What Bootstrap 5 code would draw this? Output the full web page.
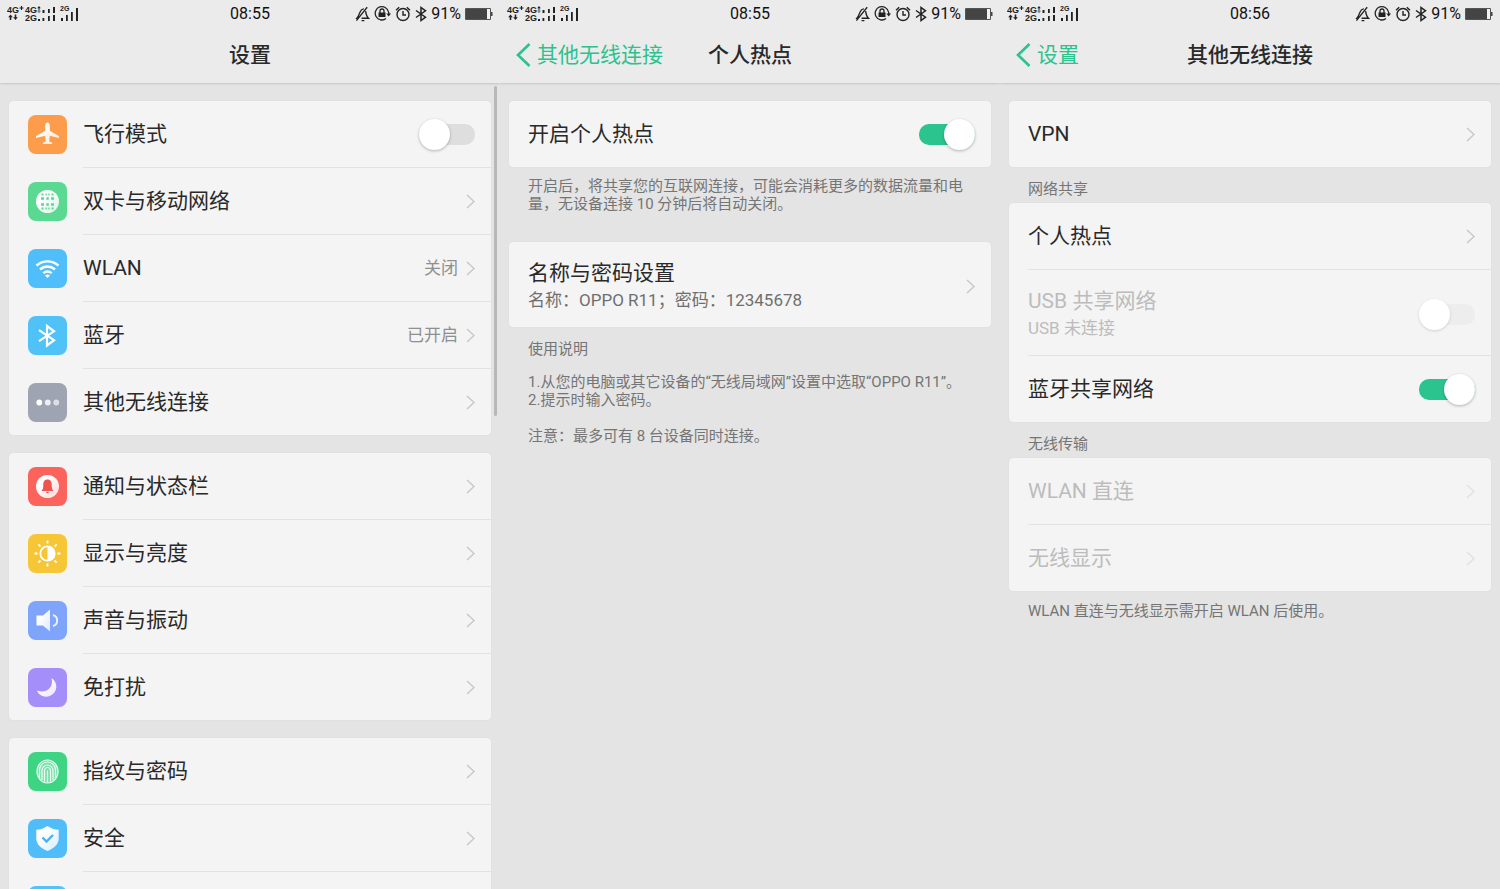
<!DOCTYPE html>
<html lang="zh-CN">
<head>
<meta charset="utf-8">
<meta name="viewport" content="width=device-width, initial-scale=1">
<title>设置</title>
<link href="https://cdn.jsdelivr.net/npm/bootstrap@5.3.0/dist/css/bootstrap.min.css" rel="stylesheet">
<style>
  body { background: #e4e4e4; color: #292929; font-family: Roboto, "Noto Sans CJK SC", sans-serif; font-size: 21px; line-height: 28px; }
  .screen { height: 100vh; overflow: hidden; }
  .topbar { background: #ebebeb; box-shadow: 0 1px 2px rgba(0,0,0,.14); }
  .equal-thirds { display: grid; grid-template-columns: 1fr auto 1fr; align-items: center; }
  .status { height: 26px; padding: 1px 7px 0; font-size: 16px; line-height: 25px; color: #111; }
  .signal { overflow: visible; fill: #222; }
  .titlebar { height: 57px; padding: 0 16px; }
  .titlebar h1 { font-size: 21px; line-height: 28px; font-weight: 500; }
  .back-link { color: #2bc28e; gap: 6px; }
  .panes { padding: 18px 9px 0; }
  .stack { gap: 18px; }
  .group-box { --bs-list-group-bg: #f4f4f4; --bs-list-group-color: #292929; border-radius: 4px; background: #f4f4f4; box-shadow: 0 0 1px rgba(0,0,0,.12); }
  .group-box .list-group-item { border: 0; padding: 0 0 0 19px; display: flex; align-items: center; gap: 16px; background: transparent; color: inherit; }
  .cell { min-height: 66px; padding-right: 16px; gap: 8px; }
  .cell-tall { min-height: 82px; padding-top: 3px; box-sizing: content-box; }
  .list-group-item:not(:last-child) > .cell { border-bottom: 1px solid #e2e2e2; box-sizing: content-box; }
  .app-icon { width: 39px; height: 39px; flex: none; }
  .state { font-size: 17px; color: #8f8f8f; }
  .detail { font-size: 17px; line-height: 26px; color: #6f6f6f; }
  .off .cell, .off .detail { color: #bcbcbc; }
  .off .chev { opacity: .4; }
  .chev { width: 9px; height: 15px; fill: none; stroke: #c8c8c8; stroke-width: 1.5px; flex: none; }
  .hint { margin: 0; padding: 0 19px; font-size: 15px; line-height: 18px; color: #757575; }
  .hint-intro { padding-top: 10px; padding-bottom: 29px; }
  .hint-title { padding-top: 13px; padding-bottom: 15px; }
  .hint-label { padding-top: 13px; padding-bottom: 5px; }
  .group-box + .hint-end { padding-top: 11px; }
  .group-box .toggle { appearance: none; position: relative; width: 56px; height: 31px; margin: 0; flex: none; border: 0; background: none; opacity: 1; }
  .toggle::before { content: ""; position: absolute; inset: 5px 0; border-radius: 10px; background: #dedede; }
  .toggle::after { content: ""; position: absolute; top: 0; left: 0; width: 31px; height: 31px; border-radius: 50%; background: #fff; box-shadow: 0 1px 3px rgba(0,0,0,.28); }
  .toggle:checked::before { background: #2bc48f; }
  .toggle:checked::after { left: auto; right: 0; }
  .toggle:disabled::before { background: #ededed; }
  .toggle:disabled::after { box-shadow: 0 1px 3px rgba(0,0,0,.14); }
  .scroll-thumb { position: absolute; right: 3px; top: 86px; width: 3px; height: 330px; border-radius: 2px; background: #b8b8b8; }
  svg text { font-family: "Liberation Sans", sans-serif; font-weight: 700; font-size: 9px; }
  svg text.tiny { font-size: 7px; }
</style>
</head>
<body>
<svg class="position-absolute" width="0" height="0" xmlns="http://www.w3.org/2000/svg">
  <defs>
    <linearGradient id="fade" x1="0" y1="0" x2="1" y2="1"><stop offset=".3" stop-color="#fff"/><stop offset="1" stop-color="#fff" stop-opacity=".75"/></linearGradient>
  </defs>
  <symbol id="bars" viewBox="0 0 74 20">
    <g fill="#222">
      <path d="M12.500 4h4M14.500 2v4" stroke="#222" stroke-width="1.200"/>
      <path d="M3.500 10.500l2.300 2.700H4.300V16H2.700v-2.800H1.200zM8.500 16l-2.300-2.700h1.500v-2.800h1.600v2.800h1.500z"/>
      <path d="M32 2l1.800 2.200h-3.600zM32 9l1.800-2.200h-3.600zM31.500 3h1v5h-1z"/>
      <path d="M35.500 6h2v3h-2zM41 5h1.800v4H41zM46 3h2v6h-2z"/>
      <path d="M31 15h2v2h-2zM35.500 14h1.800v3h-1.800zM41 12h1.800v5H41zM46 11h2v6h-2z"/>
      <path d="M54 14h2v3h-2zM59 11h1.800v6H59zM64 8h1.800v9H64zM69 4h2v13h-2z"/>
    </g>
  </symbol>
  <symbol id="quiet" viewBox="0 0 16 16"><g fill="none" stroke="#222" stroke-width="1.400"><path d="M9.500 2.500C4.500 2.800 5.600 8.500 2 12.500h1.500M11.300 5c.4 3 .9 5.500 3 7.500H7M13 .800L1.500 15M7 15h3"/></g></symbol>
  <symbol id="rotlock" viewBox="0 0 17 17"><path d="M14.500 7A6.700 6.700 0 1 0 12 13.600M14.700 7v2" fill="none" stroke="#222" stroke-width="1.300"/><path d="M12.300 8.500h4.700l-2.300 3z" fill="#222"/><path d="M4.500 7.500h7V12h-7z" fill="#222"/><path d="M6 8V6a2 2 0 0 1 4 0v2" fill="none" stroke="#222" stroke-width="1.300"/></symbol>
  <symbol id="alarm" viewBox="0 0 16 16"><g fill="none" stroke="#222" stroke-width="1.400"><circle cx="8" cy="8.500" r="6"/><path d="M8 5v4h3M1 4.200L4.200 1.200M15 4.200l-3.200-3"/></g></symbol>
  <symbol id="bt" viewBox="0 0 12 16"><path d="M1 4.500l9.500 6.700L6 14.500v-13l4.500 3.300L1 11.500" fill="none" stroke="#222" stroke-width="1.500"/></symbol>
  <symbol id="battery" viewBox="0 0 28 12"><path d="M.5.500h25v11H.5z" fill="#f2f2f2" stroke="#555"/><path d="M1 1h21v10H1z" fill="#444"/><path d="M26 4h1.500v4H26z" fill="#444"/></symbol>
  <symbol id="next" viewBox="0 0 9 15"><path d="M1 1l7 6.500L1 14"/></symbol>
  <symbol id="prev" viewBox="0 0 15 24"><path d="M13.500 1L2 12l11.500 11" fill="none" stroke="#2bc28e" stroke-width="2.600"/></symbol>
</svg>

<main class="container-fluid p-0">
 <div class="row g-0">

  <section class="col-4 screen position-relative">
    <header class="topbar">
      <div class="status equal-thirds">
        <svg class="signal" width="74" height="20"><text x="0" y="9">4G</text><text x="18" y="9">4G</text><text x="18" y="17">2G</text><text class="tiny" x="53" y="7">2G</text><use href="#bars" width="74" height="20"/></svg>
        <span>08:55</span>
        <div class="d-flex justify-content-end align-items-center gap-1">
          <svg width="15" height="16"><use href="#quiet"/></svg><svg width="17" height="17"><use href="#rotlock"/></svg><svg width="16" height="16"><use href="#alarm"/></svg><svg width="12" height="16"><use href="#bt"/></svg><span>91%</span><svg width="28" height="12"><use href="#battery"/></svg>
        </div>
      </div>
      <div class="titlebar equal-thirds"><span></span><h1 class="m-0">设置</h1><span></span></div>
    </header>
    <div class="panes stack d-flex flex-column">
      <div class="list-group group-box">
        <label class="list-group-item" for="flight">
          <svg class="app-icon" viewBox="0 0 39 39"><rect width="39" height="39" rx="8" fill="#fd9d4c"/><path fill="url(#fade)" d="M19.500 7.500c1.500 0 2.300 2 2.300 4v4.200l9.200 5.500v1.800l-9.200-2.200-.6 5.400 3 1.700V29h-9.400v-1.100l3-1.700-.6-5.400L8 23v-1.800l9.200-5.500v-4.200c0-2 .8-4 2.300-4z"/></svg>
          <span class="cell flex-fill d-flex align-items-center"><span class="flex-fill">飞行模式</span><input class="form-check-input toggle" type="checkbox" role="switch" id="flight"></span>
        </label>
        <a href="#" class="list-group-item">
          <svg class="app-icon" viewBox="0 0 39 39"><rect width="39" height="39" rx="8" fill="#5bd892"/><circle cx="19.500" cy="19.500" r="11.500" fill="url(#fade)"/><g fill="none" stroke="#5bd892" stroke-width="3"><path d="M13 16.500h3M18.300 16.500h2.500M23 16.500h3M13 22.500h3M18.300 22.500h2.500M23 22.500h3" stroke-width="2.600"/><path d="M17.500 12.500h1.300M20.300 12.500h1.300M17.500 26.500h1.300M20.300 26.500h1.300M13.500 12.500h2M23.500 12.500h2M13.500 26.500h2M23.500 26.500h2" stroke-width="2"/></g></svg>
          <span class="cell flex-fill d-flex align-items-center"><span class="flex-fill">双卡与移动网络</span><svg class="chev"><use href="#next"/></svg></span>
        </a>
        <a href="#" class="list-group-item">
          <svg class="app-icon" viewBox="0 0 39 39"><rect width="39" height="39" rx="8" fill="#50befa"/><g fill="none" stroke="#fff" stroke-width="2.400"><path d="M8.500 16.500c6.500-5.500 15.500-5.500 22 0M12 20.500c4.500-4 10.500-4 15 0M15.300 24.200c2.600-2.200 5.800-2.200 8.400 0"/></g><path d="M17 26.500c1.500-1.300 3.500-1.300 5 0L19.500 29z" fill="#fff"/></svg>
          <span class="cell flex-fill d-flex align-items-center"><span class="flex-fill">WLAN</span><span class="state">关闭</span><svg class="chev"><use href="#next"/></svg></span>
        </a>
        <a href="#" class="list-group-item">
          <svg class="app-icon" viewBox="0 0 39 39"><rect width="39" height="39" rx="8" fill="#4fc2f8"/><path d="M11 14.200l15 10-7 5.300V10l7 5.300-15 9.900" fill="none" stroke="#fff" stroke-width="2.200"/></svg>
          <span class="cell flex-fill d-flex align-items-center"><span class="flex-fill">蓝牙</span><span class="state">已开启</span><svg class="chev"><use href="#next"/></svg></span>
        </a>
        <a href="#" class="list-group-item">
          <svg class="app-icon" viewBox="0 0 39 39"><rect width="39" height="39" rx="8" fill="#9ea4b2"/><circle cx="11.300" cy="19.500" r="2.900" fill="#fff"/><circle cx="19.800" cy="19.500" r="2.900" fill="#eceef1"/><circle cx="28.300" cy="19.500" r="2.900" fill="#dcdfe5"/></svg>
          <span class="cell flex-fill d-flex align-items-center"><span class="flex-fill">其他无线连接</span><svg class="chev"><use href="#next"/></svg></span>
        </a>
      </div>

      <div class="list-group group-box">
        <a href="#" class="list-group-item">
          <svg class="app-icon" viewBox="0 0 39 39"><rect width="39" height="39" rx="8" fill="#fb635c"/><circle cx="19.500" cy="19.500" r="11.500" fill="url(#fade)"/><path fill="#f0544e" d="M19.500 12.500c3 0 4.200 2.300 4.200 5 0 3.500.3 5 1.800 6.500h-12c1.500-1.500 1.800-3 1.800-6.500 0-2.700 1.200-5 4.200-5zM18 24.800h3c0 1.800-3 1.800-3 0z"/></svg>
          <span class="cell flex-fill d-flex align-items-center"><span class="flex-fill">通知与状态栏</span><svg class="chev"><use href="#next"/></svg></span>
        </a>
        <a href="#" class="list-group-item">
          <svg class="app-icon" viewBox="0 0 39 39"><rect width="39" height="39" rx="8" fill="#f6c636"/><circle cx="19.500" cy="19.500" r="7.200" fill="none" stroke="#fff" stroke-width="1.800"/><path d="M19.500 12.500a7 7 0 0 1 0 14z" fill="#fff"/><path d="M19.500 6.500v3M19.500 29.500v3M6.500 19.500h3M29.500 19.500h3M10.300 10.300l2.200 2.200M26.500 26.500l2.200 2.200M28.700 10.300l-2.200 2.200M12.500 26.500l-2.200 2.200" stroke="#fff" stroke-width="1.800"/></svg>
          <span class="cell flex-fill d-flex align-items-center"><span class="flex-fill">显示与亮度</span><svg class="chev"><use href="#next"/></svg></span>
        </a>
        <a href="#" class="list-group-item">
          <svg class="app-icon" viewBox="0 0 39 39"><rect width="39" height="39" rx="8" fill="#7ea4fb"/><path d="M8.500 14.500h6.500l7-6v22l-7-6H8.500z" fill="url(#fade)"/><path d="M25 14c5.500 1.500 5.500 9.500 0 11" fill="none" stroke="#eaf1ff" stroke-width="1.900"/></svg>
          <span class="cell flex-fill d-flex align-items-center"><span class="flex-fill">声音与振动</span><svg class="chev"><use href="#next"/></svg></span>
        </a>
        <a href="#" class="list-group-item">
          <svg class="app-icon" viewBox="0 0 39 39"><rect width="39" height="39" rx="8" fill="#a48ffa"/><path d="M23.500 10c7 4.500 6.300 14.500-1.200 17.800-5.300 2.200-11 .2-13.300-5.300 9.500 3.300 17-3 14.500-12.500z" fill="url(#fade)"/></svg>
          <span class="cell flex-fill d-flex align-items-center"><span class="flex-fill">免打扰</span><svg class="chev"><use href="#next"/></svg></span>
        </a>
      </div>

      <div class="list-group group-box">
        <a href="#" class="list-group-item">
          <svg class="app-icon" viewBox="0 0 39 39"><rect width="39" height="39" rx="8" fill="#3dd483"/><ellipse cx="19.500" cy="19.500" rx="10.500" ry="11.500" fill="#fff" fill-opacity=".3"/><g fill="none" stroke="#effff6" stroke-width="1.200"><ellipse cx="19.500" cy="19.500" rx="10.500" ry="11.500"/><path d="M11.500 25.500V18a8 8 0 0 1 16 0v7.500M14 28V18.500a5.500 5.500 0 0 1 11 0V28M16.500 29.500v-11a3 3 0 0 1 6 0v11M19.500 30V18.500"/></g></svg>
          <span class="cell flex-fill d-flex align-items-center"><span class="flex-fill">指纹与密码</span><svg class="chev"><use href="#next"/></svg></span>
        </a>
        <a href="#" class="list-group-item">
          <svg class="app-icon" viewBox="0 0 39 39"><rect width="39" height="39" rx="8" fill="#50bdfa"/><path d="M19.500 7c3.500 2.500 7 3.500 11.200 3.800v8.700c0 6-5 9.800-11.200 12.500-6.200-2.700-11.200-6.500-11.200-12.500v-8.700C12.500 10.500 16 9.500 19.500 7z" fill="url(#fade)"/><path d="M14.500 18.500l4 4 6.500-6.500" fill="none" stroke="#50aef0" stroke-width="2.300"/></svg>
          <span class="cell flex-fill d-flex align-items-center"><span class="flex-fill">安全</span><svg class="chev"><use href="#next"/></svg></span>
        </a>
        <a href="#" class="list-group-item">
          <svg class="app-icon" viewBox="0 0 39 39"><rect width="39" height="39" rx="8" fill="#50c4f4"/></svg>
          <span class="cell flex-fill"></span>
        </a>
      </div>
    </div>
    <div class="scroll-thumb"></div>
  </section>

  <section class="col-4 screen">
    <header class="topbar">
      <div class="status equal-thirds">
        <svg class="signal" width="74" height="20"><text x="0" y="9">4G</text><text x="18" y="9">4G</text><text x="18" y="17">2G</text><text class="tiny" x="53" y="7">2G</text><use href="#bars" width="74" height="20"/></svg>
        <span>08:55</span>
        <div class="d-flex justify-content-end align-items-center gap-1">
          <svg width="15" height="16"><use href="#quiet"/></svg><svg width="17" height="17"><use href="#rotlock"/></svg><svg width="16" height="16"><use href="#alarm"/></svg><svg width="12" height="16"><use href="#bt"/></svg><span>91%</span><svg width="28" height="12"><use href="#battery"/></svg>
        </div>
      </div>
      <nav class="titlebar equal-thirds"><a href="#" class="back-link d-flex align-items-center text-decoration-none"><svg width="15" height="24"><use href="#prev"/></svg>其他无线连接</a><h1 class="m-0">个人热点</h1><span></span></nav>
    </header>
    <div class="panes">
      <div class="list-group group-box">
        <label class="list-group-item" for="hotspot"><span class="cell flex-fill d-flex align-items-center"><span class="flex-fill">开启个人热点</span><input class="form-check-input toggle" type="checkbox" role="switch" id="hotspot" checked></span></label>
      </div>
      <p class="hint hint-intro">开启后，将共享您的互联网连接，可能会消耗更多的数据流量和电<br>量，无设备连接 10 分钟后将自动关闭。</p>
      <div class="list-group group-box">
        <a href="#" class="list-group-item"><span class="cell cell-tall flex-fill d-flex align-items-center"><span class="flex-fill d-flex flex-column"><span>名称与密码设置</span><span class="detail">名称：OPPO R11；密码：12345678</span></span><svg class="chev"><use href="#next"/></svg></span></a>
      </div>
      <p class="hint hint-title">使用说明</p>
      <p class="hint">1.从您的电脑或其它设备的“无线局域网”设置中选取“OPPO R11”。<br>2.提示时输入密码。<br><br>注意：最多可有 8 台设备同时连接。</p>
    </div>
  </section>

  <section class="col-4 screen">
    <header class="topbar">
      <div class="status equal-thirds">
        <svg class="signal" width="74" height="20"><text x="0" y="9">4G</text><text x="18" y="9">4G</text><text x="18" y="17">2G</text><text class="tiny" x="53" y="7">2G</text><use href="#bars" width="74" height="20"/></svg>
        <span>08:56</span>
        <div class="d-flex justify-content-end align-items-center gap-1">
          <svg width="15" height="16"><use href="#quiet"/></svg><svg width="17" height="17"><use href="#rotlock"/></svg><svg width="16" height="16"><use href="#alarm"/></svg><svg width="12" height="16"><use href="#bt"/></svg><span>91%</span><svg width="28" height="12"><use href="#battery"/></svg>
        </div>
      </div>
      <nav class="titlebar equal-thirds"><a href="#" class="back-link d-flex align-items-center text-decoration-none"><svg width="15" height="24"><use href="#prev"/></svg>设置</a><h1 class="m-0">其他无线连接</h1><span></span></nav>
    </header>
    <div class="panes">
      <div class="list-group group-box">
        <a href="#" class="list-group-item"><span class="cell flex-fill d-flex align-items-center"><span class="flex-fill">VPN</span><svg class="chev"><use href="#next"/></svg></span></a>
      </div>
      <p class="hint hint-label">网络共享</p>
      <div class="list-group group-box">
        <a href="#" class="list-group-item"><span class="cell flex-fill d-flex align-items-center"><span class="flex-fill">个人热点</span><svg class="chev"><use href="#next"/></svg></span></a>
        <label class="list-group-item off" for="usb"><span class="cell cell-tall flex-fill d-flex align-items-center"><span class="flex-fill d-flex flex-column"><span>USB 共享网络</span><span class="detail">USB 未连接</span></span><input class="form-check-input toggle" type="checkbox" role="switch" id="usb" disabled></span></label>
        <label class="list-group-item" for="btshare"><span class="cell flex-fill d-flex align-items-center"><span class="flex-fill">蓝牙共享网络</span><input class="form-check-input toggle" type="checkbox" role="switch" id="btshare" checked></span></label>
      </div>
      <p class="hint hint-label">无线传输</p>
      <div class="list-group group-box">
        <a href="#" class="list-group-item off"><span class="cell flex-fill d-flex align-items-center"><span class="flex-fill">WLAN 直连</span><svg class="chev"><use href="#next"/></svg></span></a>
        <a href="#" class="list-group-item off"><span class="cell flex-fill d-flex align-items-center"><span class="flex-fill">无线显示</span><svg class="chev"><use href="#next"/></svg></span></a>
      </div>
      <p class="hint hint-end">WLAN 直连与无线显示需开启 WLAN 后使用。</p>
    </div>
  </section>

 </div>
</main>
<script src="https://cdn.jsdelivr.net/npm/bootstrap@5.3.0/dist/js/bootstrap.bundle.min.js"></script>
</body>
</html>
